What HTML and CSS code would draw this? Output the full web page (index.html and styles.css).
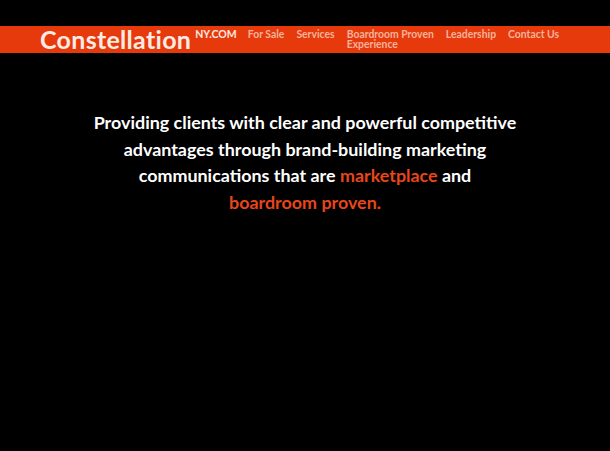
FILE: index.html
```html
<!DOCTYPE html>
<html lang="en">
<head>
<meta charset="utf-8">
<title>Constellation NY.COM</title>
<link rel="stylesheet" href="styles.css">
</head>
<body>
<header class="bar">
  <div class="brand">
    <span class="logo">Constellation</span>
    <span class="logo-suffix">NY.COM</span>
  </div>
  <nav class="nav">
    <a class="nav-item" href="#">For Sale</a>
    <a class="nav-item" href="#">Services</a>
    <a class="nav-item" href="#">Boardroom Proven<br>Experience</a>
    <a class="nav-item" href="#">Leadership</a>
    <a class="nav-item" href="#">Contact Us</a>
  </nav>
</header>
<main class="hero">
  <p class="tagline">Providing clients with clear and powerful competitive<br>advantages through brand-building marketing<br>communications that are <span class="accent">marketplace</span> and<br><span class="accent">boardroom proven.</span></p>
</main>
</body>
</html>
```
FILE: styles.css
```css
html, body {
  margin: 0;
  padding: 0;
  background: #000;
  height: 100%;
}
body {
  font-family: Lato, "Noto Sans", sans-serif;
}
.bar {
  margin-top: 26px;
  height: 27px;
  background: #e63a0c;
  display: flex;
  align-items: flex-start;
  padding-left: 40px;
  box-sizing: border-box;
}
.brand {
  display: flex;
  align-items: flex-start;
}
.logo {
  font-weight: 700;
  font-size: 25px;
  line-height: 27px;
  color: #fdebe3;
  letter-spacing: 0.3px;
}
.logo-suffix {
  font-weight: 700;
  font-size: 10.5px;
  line-height: 10px;
  color: #fdebe3;
  margin-left: 4px;
  margin-top: 3px;
}
.nav {
  display: flex;
  align-items: flex-start;
  gap: 12px;
  margin-left: 11px;
  margin-top: 3px;
}
.nav-item {
  font-weight: 700;
  font-size: 10.4px;
  line-height: 10px;
  color: #f6b39b;
  text-decoration: none;
}
.hero {
  display: flex;
  justify-content: center;
  padding-top: 56px;
}
.tagline {
  margin: 0;
  text-align: center;
  color: #fff;
  font-weight: 700;
  font-size: 17.9px;
  line-height: 26.5px;
}
.accent {
  color: #e8461b;
}
```
